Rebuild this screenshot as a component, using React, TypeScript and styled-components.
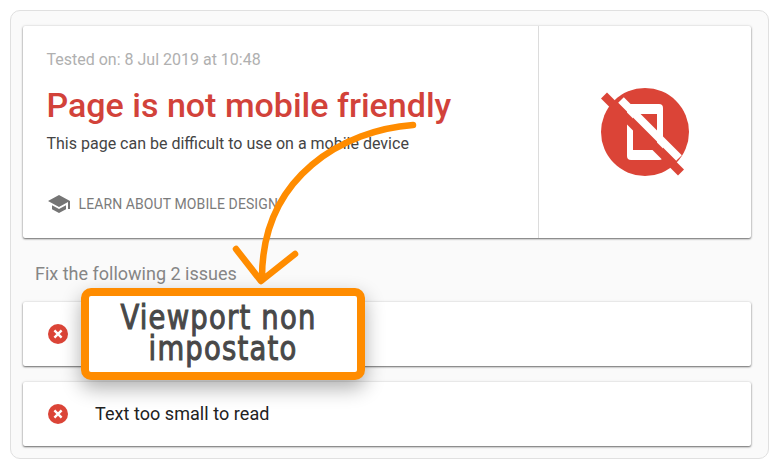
import React from "react";
import styled, { createGlobalStyle } from "styled-components";

const GlobalStyle = createGlobalStyle`
  html, body {
    margin: 0;
    padding: 0;
    background: #fff;
    font-family: Roboto, "Liberation Sans", sans-serif;
  }
`;

const Page = styled.div`
  position: relative;
  width: 779px;
  height: 468px;
  padding: 10px 10px 9px 10px;
  box-sizing: border-box;
  overflow: hidden;
`;

const Panel = styled.div`
  box-sizing: border-box;
  width: 759px;
  height: 449px;
  padding: 15px 17px 11px 12px;
  background: #fafafa;
  border: 1px solid #e0e0e0;
  border-radius: 10px;
  display: flex;
  flex-direction: column;
`;

const Card = styled.div`
  background: #fff;
  border-radius: 2px;
  box-shadow: 0 1px 2px rgba(0, 0, 0, 0.55), 0 0 3px rgba(0, 0, 0, 0.12);
`;

const SummaryCard = styled(Card)`
  height: 212px;
  display: flex;
`;

const SummaryText = styled.div`
  box-sizing: border-box;
  width: 516px;
  padding: 24px 0 0 23.5px;
  border-right: 1px solid #dcdcdc;
  display: flex;
  flex-direction: column;
`;

const TestedOn = styled.div`
  font-size: 16px;
  line-height: 19px;
  color: #b0b0b0;
`;

const Headline = styled.h1`
  margin: 16px 0 0;
  font-size: 34px;
  line-height: 40px;
  font-weight: 500;
  white-space: nowrap;
  color: #d2423a;
`;

const Subline = styled.div`
  margin-top: 9px;
  font-size: 16px;
  line-height: 20px;
  color: #444;
`;

const LearnLink = styled.div`
  margin-top: 38px;
  display: flex;
  align-items: center;
  gap: 8px;
  font-size: 14px;
  line-height: 20px;
  letter-spacing: 0.1px;
  color: #7b7b7b;
`;

const StatusCell = styled.div`
  flex: 1;
  display: flex;
  align-items: center;
  justify-content: center;
`;

const IssuesTitle = styled.div`
  margin: 26px 0 0 12px;
  font-size: 18px;
  line-height: 20px;
  color: #868686;
`;

const IssueList = styled.div`
  margin-top: 18px;
  display: flex;
  flex-direction: column;
  gap: 16px;
`;

const IssueRow = styled(Card)`
  box-sizing: border-box;
  height: 64px;
  padding-left: 25px;
  display: flex;
  align-items: center;
  gap: 27px;
  font-size: 18px;
  font-weight: 400;
  letter-spacing: 0.05px;
  color: #222;
`;

const IssueLabel = styled.span`
  padding-bottom: 2px;
`;

const ArrowLayer = styled.svg`
  position: absolute;
  left: 0;
  top: 0;
  pointer-events: none;
`;

const Callout = styled.div`
  position: absolute;
  left: 81px;
  top: 288px;
  box-sizing: border-box;
  width: 284px;
  height: 92px;
  padding-bottom: 2px;
  border: 8px solid #ff8c00;
  border-radius: 10px;
  background: #fff;
  box-shadow: 0 8px 20px rgba(0, 0, 0, 0.32);
  display: flex;
  flex-direction: column;
  align-items: center;
  justify-content: center;
  font-family: "DejaVu Sans Condensed", "DejaVu Sans", sans-serif;
  font-size: 30.5px;
  line-height: 31px;
  letter-spacing: 1.2px;
  color: #484848;
  -webkit-text-stroke: 0.9px #484848;
`;

const CalloutLine = styled.span<{ $shift?: number }>`
  display: block;
  white-space: nowrap;
  padding-right: ${({ $shift }) => $shift ?? 0}px;
  transform: scaleY(1.12);
`;

const LearnIcon = () => (
  <svg width="24" height="24" viewBox="0 0 24 24" fill="#757575">
    <path d="M5 13.18v4L12 21l7-3.82v-4L12 17l-7-3.82zM12 3L1 9l11 6 9-4.91V17h2V9L12 3z" />
  </svg>
);

const NotMobileIcon = () => (
  <svg width="92" height="92" viewBox="0 0 92 92">
    <circle cx="46" cy="46" r="44" fill="#db4437" />
    <path
      d="M32 18 H60 Q64 18 64 22 V70 Q64 74 60 74 H32 Q28 74 28 70 V22 Q28 18 32 18z M34 28 V64 H58 V28z"
      fill="#fff"
      fillRule="evenodd"
    />
    <path d="M22 14 L80 72" stroke="#fff" strokeWidth="8" />
    <path d="M5 9.5 L82 86.5" stroke="#db4437" strokeWidth="8.5" />
  </svg>
);

const ErrorIcon = () => (
  <svg width="20" height="20" viewBox="0 0 20 20">
    <circle cx="10" cy="10" r="10" fill="#db4437" />
    <path d="M6.4 6.4 L13.6 13.6 M13.6 6.4 L6.4 13.6" stroke="#fff" strokeWidth="2.4" />
  </svg>
);

export default function App() {
  return (
    <Page>
      <GlobalStyle />
      <Panel>
        <SummaryCard>
          <SummaryText>
            <TestedOn>Tested on: 8 Jul 2019 at 10:48</TestedOn>
            <Headline>Page is not mobile friendly</Headline>
            <Subline>This page can be difficult to use on a mobile device</Subline>
            <LearnLink>
              <LearnIcon />
              LEARN ABOUT MOBILE DESIGN
            </LearnLink>
          </SummaryText>
          <StatusCell>
            <NotMobileIcon />
          </StatusCell>
        </SummaryCard>
        <IssuesTitle>Fix the following 2 issues</IssuesTitle>
        <IssueList>
          <IssueRow>
            <ErrorIcon />
          </IssueRow>
          <IssueRow>
            <ErrorIcon />
            <IssueLabel>Text too small to read</IssueLabel>
          </IssueRow>
        </IssueList>
      </Panel>
      <ArrowLayer width="779" height="468" viewBox="0 0 779 468">
        <path
          d="M413 125 C345 130 262 175 262 278 M236 249 L261 281 L295 254"
          fill="none"
          stroke="#ff8c00"
          strokeWidth="6.5"
          strokeLinecap="round"
          strokeLinejoin="round"
        />
      </ArrowLayer>
      <Callout>
        <CalloutLine $shift={9}>Viewport non</CalloutLine>
        <CalloutLine>impostato</CalloutLine>
      </Callout>
    </Page>
  );
}
